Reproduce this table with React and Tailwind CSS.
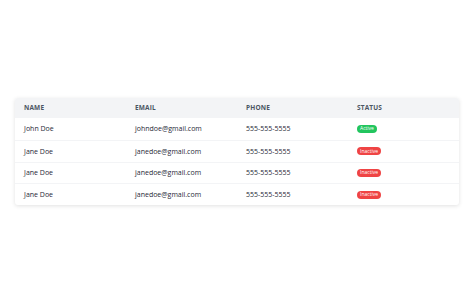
const users = [
  { name: "John Doe", email: "johndoe@gmail.com", phone: "555-555-5555", active: true },
  { name: "Jane Doe", email: "janedoe@gmail.com", phone: "555-555-5555", active: false },
  { name: "Jane Doe", email: "janedoe@gmail.com", phone: "555-555-5555", active: false },
  { name: "Jane Doe", email: "janedoe@gmail.com", phone: "555-555-5555", active: false },
];

function App() {
  return (
    <div
      className="w-full h-[303px] flex items-center justify-center bg-white"
      style={{ fontFamily: '"Open Sans", sans-serif' }}
    >
      <div className="w-[444px] rounded-[3px] overflow-hidden shadow-[0_1px_4px_rgba(0,0,0,0.12)] bg-white">
        <div className="grid grid-cols-4 items-center h-[20px] bg-[#f3f4f6] text-[6.5px] leading-none font-bold uppercase tracking-wide text-[#4b5563]">
          <div className="pl-[9px]">Name</div>
          <div className="pl-[9px]">Email</div>
          <div className="pl-[9px]">Phone</div>
          <div className="pl-[9px]">Status</div>
        </div>
        {users.map((u, i) => (
          <div
            key={i}
            className={`grid grid-cols-4 items-center h-[21.75px] text-[7px] leading-none text-[#1f2937] ${
              i > 0 ? "border-t border-[#f3f4f6]" : ""
            }`}
          >
            <div className="pl-[9px]">{u.name}</div>
            <div className="pl-[9px]">{u.email}</div>
            <div className="pl-[9px]">{u.phone}</div>
            <div className="pl-[9px] flex">
              {u.active ? (
                <span className="flex items-center h-[8px] px-[3px] rounded-full bg-[#22c55e] text-white text-[5px] leading-none">
                  Active
                </span>
              ) : (
                <span className="flex items-center h-[8px] px-[3px] rounded-full bg-[#ef4444] text-white text-[5px] leading-none">
                  Inactive
                </span>
              )}
            </div>
          </div>
        ))}
      </div>
    </div>
  );
}

export default App;
